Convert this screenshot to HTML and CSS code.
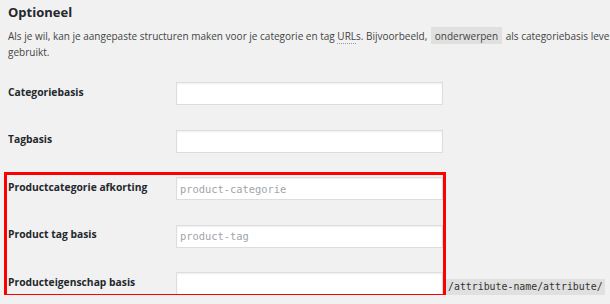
FILE: index.html
```html
<!DOCTYPE html>
<html lang="nl">
<head>
    <meta charset="UTF-8">
    <meta name="viewport" content="width=device-width, initial-scale=1.0">
    <title>Permalinkinstellingen</title>
    <link rel="stylesheet" href="styles.css">
</head>
<body>

<div class="wrap">
    <h2 class="title">Optioneel</h2>
    <p class="intro">Als je wil, kan je aangepaste structuren maken voor je categorie en tag <abbr title="Uniform Resource Locator">URL</abbr>s. Bijvoorbeeld, <code>onderwerpen</code> als categoriebasis levert links als <code>http://example.org/onderwerpen/ongecategoriseerd/</code> op. Als je deze leeg laat, worden de standaardwaarden<br>gebruikt.</p>

    <!-- Permalink bases -->
    <div class="form-table">
        <div class="field">
            <label for="category_base">Categoriebasis</label>
            <input type="text" id="category_base" class="regular-text">
        </div>
        <div class="field">
            <label for="tag_base">Tagbasis</label>
            <input type="text" id="tag_base" class="regular-text">
        </div>
        <div class="field">
            <label for="product_category_slug">Productcategorie afkorting</label>
            <input type="text" id="product_category_slug" class="regular-text code" placeholder="product-categorie">
        </div>
        <div class="field">
            <label for="product_tag_slug">Product tag basis</label>
            <input type="text" id="product_tag_slug" class="regular-text code" placeholder="product-tag">
        </div>
        <div class="field">
            <label for="product_attribute_slug">Producteigenschap basis</label>
            <input type="text" id="product_attribute_slug" class="regular-text code">
            <code class="suffix">/attribute-name/attribute/</code>
        </div>

        <!-- annotation drawn over the WooCommerce fields -->
        <div class="highlight"></div>
    </div>
</div>

</body>
</html>
```

FILE: styles.css
```css
/* Styles */
html, body {
    overflow: hidden;
}

body {
    margin: 0;
    padding: 0;
    background-color: #f1f1f1;
    color: #444;
    font-family: "Open Sans", sans-serif;
    font-size: 10px;
}

.wrap {
    padding: 0 8px;
}

.title {
    margin: 2px 0 0;
    font-size: 13px;
    line-height: 20px;
    font-weight: bold;
    color: #23282d;
}

.intro {
    margin: 6px 0 0;
    width: 1400px;
    line-height: 16px;
}

abbr {
    text-decoration: none;
    border-bottom: 1px dotted #999;
}

code {
    font-family: "Open Sans", sans-serif;
    font-size: 10px;
    background-color: rgba(0, 0, 0, 0.07);
    padding: 2px 4px 1px;
    margin: 0 1px;
}

.form-table {
    position: relative;
    display: grid;
    row-gap: 24.5px;
    margin-top: 22px;
}

.field {
    display: flex;
    align-items: flex-start;
    height: 23px;
}

.field label {
    width: 168px;
    flex-shrink: 0;
    padding-top: 2.5px;
    line-height: 14px;
    font-size: 10.3px;
    font-weight: bold;
    color: #23282d;
}

.regular-text {
    box-sizing: border-box;
    flex-shrink: 0;
    width: 267px;
    height: 23px;
    margin: 0;
    padding: 0 3px;
    border: 1px solid #ddd;
    box-shadow: inset 0 1px 2px rgba(0, 0, 0, 0.07);
    background-color: #fff;
    font-family: "Open Sans", sans-serif;
    font-size: 10.7px;
    color: #32373c;
}

.regular-text.code {
    font-family: "DejaVu Sans Mono", monospace;
    font-size: 10.4px;
}

.regular-text::placeholder {
    color: #a0a5aa;
}

.suffix {
    align-self: flex-end;
    flex-shrink: 0;
    margin-left: 3px;
    padding: 1px 2px;
    line-height: 14px;
    white-space: nowrap;
    font-family: "DejaVu Sans Mono", monospace;
    font-size: 9.9px;
    color: #333;
}

.highlight {
    position: absolute;
    left: -4px;
    top: 90px;
    width: 436px;
    height: 119px;
    border: 3px solid #ff0000;
    pointer-events: none;
}
```
